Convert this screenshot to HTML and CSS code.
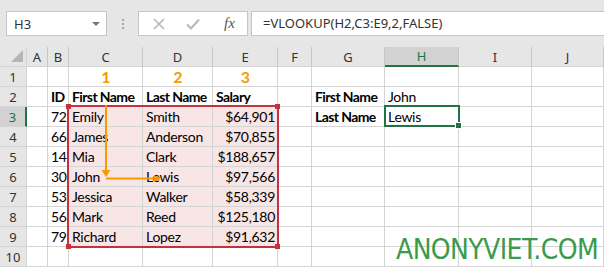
FILE: index.html
```html
<!DOCTYPE html>
<html>
<head>
    <title>VLOOKUP - Excel</title>
    <link rel="stylesheet" href="styles.css">
</head>
<body>
    <div class="app">
        <div class="formula-bar">
            <div class="name-box">
                <span>H3</span>
                <span class="caret"></span>
            </div>
            <div class="grip">
                <span></span><span></span><span></span>
            </div>
            <div class="fx-buttons">
                <svg class="btn-icon" width="12" height="12" viewBox="0 0 12 12"><path d="M1 1L11 11M11 1L1 11" stroke="#b8b8b8" stroke-width="1.6" fill="none"/></svg>
                <svg class="btn-icon" width="14" height="12" viewBox="0 0 14 12"><path d="M1 6.5L5 10.5L13 1.5" stroke="#b8b8b8" stroke-width="2" fill="none"/></svg>
                <span class="fx">fx</span>
            </div>
            <div class="formula-input">=VLOOKUP(H2,C3:E9,2,FALSE)</div>
        </div>

        <div class="sheet">
            <div class="grid">
                <div class="corner">
                    <svg width="12" height="12" viewBox="0 0 12 12"><polygon points="12,0 12,12 0,12" fill="#b5b5b5"/></svg>
                </div>
                <div class="ch">A</div>
                <div class="ch">B</div>
                <div class="ch">C</div>
                <div class="ch">D</div>
                <div class="ch">E</div>
                <div class="ch">F</div>
                <div class="ch">G</div>
                <div class="ch active">H</div>
                <div class="ch">I</div>
                <div class="ch">J</div>

                <div class="rh">1</div>
                <div class="c"></div><div class="c"></div>
                <div class="c step">1</div><div class="c step">2</div><div class="c step">3</div>
                <div class="c"></div><div class="c"></div><div class="c"></div><div class="c"></div><div class="c"></div>

                <div class="rh">2</div>
                <div class="c"></div>
                <div class="c b">ID</div>
                <div class="c b">First Name</div>
                <div class="c b">Last Name</div>
                <div class="c b">Salary</div>
                <div class="c"></div>
                <div class="c b">First Name</div>
                <div class="c">John</div>
                <div class="c"></div><div class="c"></div>

                <div class="rh active">3</div>
                <div class="c"></div>
                <div class="c r">72</div>
                <div class="c pk">Emily</div>
                <div class="c pk">Smith</div>
                <div class="c pk r">$64,901</div>
                <div class="c"></div>
                <div class="c b">Last Name</div>
                <div class="c">Lewis</div>
                <div class="c"></div><div class="c"></div>

                <div class="rh">4</div>
                <div class="c"></div>
                <div class="c r">66</div>
                <div class="c pk">James</div>
                <div class="c pk">Anderson</div>
                <div class="c pk r">$70,855</div>
                <div class="c"></div><div class="c"></div><div class="c"></div><div class="c"></div><div class="c"></div>

                <div class="rh">5</div>
                <div class="c"></div>
                <div class="c r">14</div>
                <div class="c pk">Mia</div>
                <div class="c pk">Clark</div>
                <div class="c pk r">$188,657</div>
                <div class="c"></div><div class="c"></div><div class="c"></div><div class="c"></div><div class="c"></div>

                <div class="rh">6</div>
                <div class="c"></div>
                <div class="c r">30</div>
                <div class="c pk">John</div>
                <div class="c pk">Lewis</div>
                <div class="c pk r">$97,566</div>
                <div class="c"></div><div class="c"></div><div class="c"></div><div class="c"></div><div class="c"></div>

                <div class="rh">7</div>
                <div class="c"></div>
                <div class="c r">53</div>
                <div class="c pk">Jessica</div>
                <div class="c pk">Walker</div>
                <div class="c pk r">$58,339</div>
                <div class="c"></div><div class="c"></div><div class="c"></div><div class="c"></div><div class="c"></div>

                <div class="rh">8</div>
                <div class="c"></div>
                <div class="c r">56</div>
                <div class="c pk">Mark</div>
                <div class="c pk">Reed</div>
                <div class="c pk r">$125,180</div>
                <div class="c"></div><div class="c"></div><div class="c"></div><div class="c"></div><div class="c"></div>

                <div class="rh">9</div>
                <div class="c"></div>
                <div class="c r">79</div>
                <div class="c pk">Richard</div>
                <div class="c pk">Lopez</div>
                <div class="c pk r">$91,632</div>
                <div class="c"></div><div class="c"></div><div class="c"></div><div class="c"></div><div class="c"></div>

                <div class="rh">10</div>
                <div class="c"></div><div class="c"></div><div class="c"></div><div class="c"></div><div class="c"></div>
                <div class="c"></div><div class="c"></div><div class="c"></div><div class="c"></div><div class="c"></div>
            </div>

            <!-- lookup range C3:E9 -->
            <div class="range">
                <span class="knob tl"></span>
                <span class="knob tr"></span>
                <span class="knob bl"></span>
                <span class="knob br"></span>
            </div>

            <!-- steps of the lookup -->
            <svg class="arrows" width="604" height="220" viewBox="0 0 604 220">
                <path d="M106 58V124" stroke="#f59b00" stroke-width="2" fill="none"/>
                <polygon points="101.5,123 110.5,123 106,130" fill="#f59b00"/>
                <path d="M106 131.5H155" stroke="#f59b00" stroke-width="2" fill="none"/>
                <polygon points="154,128 154,135 162,131.5" fill="#f59b00"/>
            </svg>

            <!-- active cell H3 -->
            <div class="active-cell"><span class="handle"></span></div>
        </div>

        <div class="watermark">ANONYVIET.COM</div>
    </div>
</body>
</html>
```

FILE: styles.css
```css
body {
    margin: 0;
    background: #fff;
    font-family: Lato, "Liberation Sans", sans-serif;
}
.app {
    position: relative;
    width: 604px;
    height: 267px;
    overflow: hidden;
}

/* formula bar */
.formula-bar {
    height: 47px;
    box-sizing: border-box;
    padding: 11px 0 0 6px;
    background: #e6e6e6;
    display: flex;
    align-items: flex-start;
    font-family: "Noto Sans", "Open Sans", sans-serif;
    font-size: 13px;
    color: #333;
}
.name-box {
    width: 101px;
    height: 25px;
    box-sizing: border-box;
    background: #fff;
    border: 1px solid #c6c6c6;
    display: flex;
    align-items: center;
    justify-content: space-between;
    padding: 0 6px 0 7px;
}
.caret {
    width: 0;
    height: 0;
    border-left: 4px solid transparent;
    border-right: 4px solid transparent;
    border-top: 4px solid #777;
}
.grip {
    width: 31px;
    height: 25px;
    display: flex;
    flex-direction: column;
    align-items: center;
    justify-content: center;
    gap: 2px;
}
.grip span {
    width: 2px;
    height: 2px;
    background: #a6a6a6;
}
.fx-buttons {
    width: 110px;
    height: 25px;
    box-sizing: border-box;
    background: #fff;
    border: 1px solid #c6c6c6;
    display: flex;
    align-items: center;
    padding: 0 0 0 14px;
    gap: 21px;
}
.fx {
    font-family: "Liberation Serif", serif;
    font-style: italic;
    font-size: 15px;
    color: #555;
    margin-left: 3px;
}
.formula-input {
    flex: 1;
    height: 25px;
    box-sizing: border-box;
    margin-left: 3px;
    background: #fff;
    border: 1px solid #c6c6c6;
    border-right: none;
    padding: 0 0 0 11px;
    line-height: 23px;
}

/* sheet grid */
.sheet {
    position: relative;
}
.grid {
    display: grid;
    grid-template-columns: 27px 21px 21px 74px 70px 65px 34px 73px 74px 73px 72px;
    grid-auto-rows: 20px;
}
.grid > div {
    box-sizing: border-box;
    border-right: 1px solid #d4d4d4;
    border-bottom: 1px solid #d4d4d4;
}
.corner {
    background: #e6e6e6;
    display: flex;
    align-items: flex-end;
    justify-content: flex-end;
    padding: 0 3px 4px 0;
}
.ch,
.rh {
    background: #e6e6e6;
    font-family: "Noto Sans", "Open Sans", sans-serif;
    font-size: 13px;
    color: #333;
    display: flex;
    align-items: center;
    justify-content: center;
}
.grid > .ch {
    border-right-color: #c8c8c8;
}
.grid > .ch.active {
    background: #d2d2d2;
    color: #217346;
    border-bottom: 2px solid #217346;
}
.grid > .rh.active {
    background: #d2d2d2;
    color: #217346;
    border-right: 2px solid #217346;
}
.c {
    font-size: 14px;
    line-height: 19px;
    letter-spacing: -0.3px;
    padding: 0 2px 0 3px;
    color: #000;
    white-space: nowrap;
}
.c.b {
    font-weight: bold;
    letter-spacing: -0.6px;
}
.c.r {
    text-align: right;
}
.c.pk {
    background: #f8e5e5;
}
.c.step {
    color: #f59b00;
    font-weight: bold;
    font-size: 16px;
    letter-spacing: 0;
    text-align: center;
}

/* overlays */
.range {
    position: absolute;
    left: 67px;
    top: 58px;
    width: 212px;
    height: 143px;
    box-sizing: border-box;
    border: 2px solid #c4323f;
}
.knob {
    position: absolute;
    width: 5px;
    height: 5px;
    background: #c4323f;
}
.knob.tl { left: -3px; top: -3px; }
.knob.tr { right: -3px; top: -3px; }
.knob.bl { left: -3px; bottom: -3px; }
.knob.br { right: -3px; bottom: -3px; }
.arrows {
    position: absolute;
    left: 0;
    top: 0;
}
.active-cell {
    position: absolute;
    left: 384px;
    top: 58px;
    width: 76px;
    height: 22px;
    box-sizing: border-box;
    border: 2px solid #217346;
}
.handle {
    position: absolute;
    right: -4px;
    bottom: -4px;
    width: 5px;
    height: 5px;
    background: #217346;
    border: 1px solid #fff;
}
.watermark {
    position: absolute;
    left: 396px;
    bottom: 0;
    font-family: "DejaVu Sans Condensed", "DejaVu Sans", sans-serif;
    font-stretch: condensed;
    font-size: 28px;
    line-height: 34px;
    letter-spacing: -0.6px;
    color: #3a9b4b;
}
```
